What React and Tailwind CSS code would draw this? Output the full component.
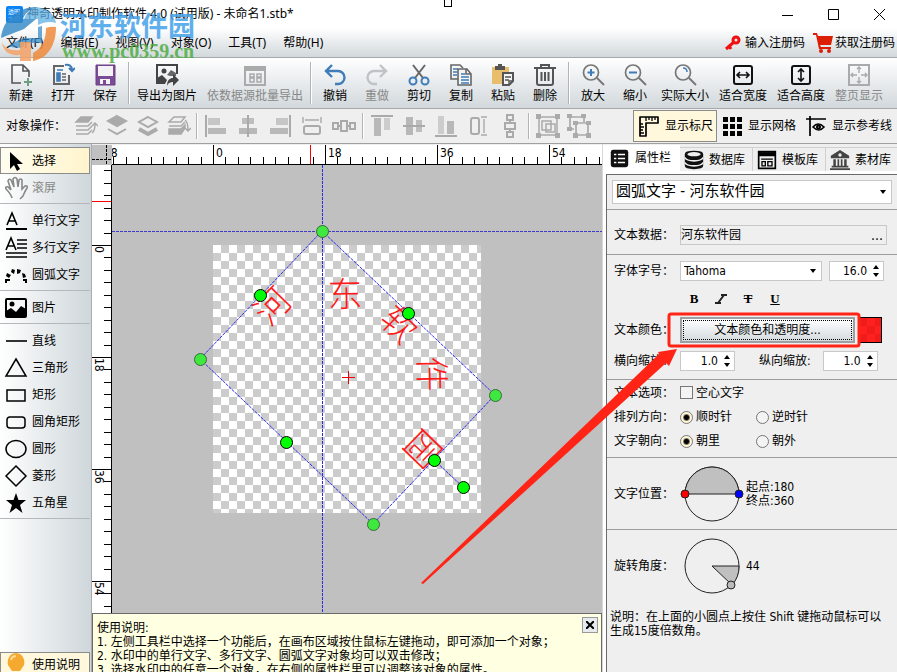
import React from 'react'

const UI = "font-['Noto_Sans','Noto_Sans_CJK_SC',sans-serif]"
const TAHOMA = "font-['DejaVu_Sans_Condensed','Noto_Sans_CJK_SC',sans-serif]"

function Svg({ size = 24, className = '', children }) {
  return (
    <svg width={size} height={size} viewBox="0 0 24 24" fill="none" stroke="currentColor" strokeWidth="2" className={`shrink-0 ${className}`} aria-hidden="true">
      {children}
    </svg>
  )
}

/* ---------- main toolbar icons ---------- */

const NewIcon = () => (
  <Svg className="text-[#555]">
    <path d="M12 20H3V2h11l6 6v6M14 2v6h6" strokeWidth="1.6" />
    <path d="M19 15v8M15 19h8" stroke="#6f9e80" />
  </Svg>
)
const OpenIcon = () => (
  <Svg className="text-[#666]">
    <path d="M13 3H3v18h15v-9" />
    <path d="M6 7h6M6 10h3v8H6z" fill="#3f7cb8" stroke="#3f7cb8" strokeWidth="1.6" />
    <path d="M11 11h4M11 14h4M11 17h4" strokeWidth="1.6" />
    <path d="M14 2c4-1 7 1 7 5M18 5l3 3 3-3" stroke="#3f7cb8" />
  </Svg>
)
const SaveIcon = () => (
  <Svg>
    <path d="M3 2h19v20H3z" fill="#7b4b96" stroke="#6a4085" strokeWidth="1" />
    <path d="M5 3h15v10H5z" fill="#f3f3f6" stroke="none" />
    <path d="M7 16h10v5H7z" fill="#f3f3f6" stroke="none" />
    <path d="M10 17h3v4h-3z" fill="#7b4b96" stroke="none" />
  </Svg>
)
const ExportIcon = () => (
  <Svg className="text-[#444]">
    <path d="M10 20H2V2h20v9" />
    <circle cx="9" cy="8" r="2.5" fill="currentColor" stroke="none" />
    <path d="M2 20v-5l5-3 5 5-2 4z" fill="currentColor" stroke="none" />
    <path d="M12 12l4-5 5 3v3h-6z" fill="currentColor" stroke="none" opacity=".8" />
    <path d="M12 23c0-6 3-8 6-8v-4l6 6-6 6v-4c-3 0-5 1-6 4z" fill="currentColor" stroke="none" />
  </Svg>
)
const BatchIcon = () => (
  <Svg className="text-[#aaa]">
    <path d="M2 4h20v18H2z" />
    <path d="M2 6h20" strokeWidth="4" />
    <path d="M7 11h4v3H7zM7 15h4v4H7zM14 11h4v3h-4zM14 15h4v4h-4z" strokeWidth="1.5" />
  </Svg>
)
const UndoIcon = () => (
  <Svg className="text-[#3f7cb8]">
    <path d="M9 2L3 8l6 6M3 8h12a6 6 0 0 1 0 13h-3" strokeWidth="2.4" />
  </Svg>
)
const RedoIcon = () => (
  <Svg className="text-[#bfc3c6]">
    <path d="M15 2l6 6-6 6M21 8H9a6 6 0 0 0 0 13h3" strokeWidth="2.4" />
  </Svg>
)
const CutIcon = () => (
  <Svg className="text-[#666]">
    <path d="M6 2l10 13M18 2L8 15" />
    <circle cx="6" cy="18" r="3.5" stroke="#3f7cb8" />
    <circle cx="18" cy="18" r="3.5" stroke="#3f7cb8" />
  </Svg>
)
const CopyIcon = () => (
  <Svg className="text-[#666]">
    <path d="M9 16H2V2h9l3 3" strokeWidth="1.6" />
    <path d="M4 6h5M4 9h4M4 12h4" stroke="#3f7cb8" strokeWidth="1.5" />
    <path d="M9 6h9l4 5v11H9z" fill="#f1f3f5" strokeWidth="1.6" />
    <path d="M17 6v5h5" strokeWidth="1.6" />
    <path d="M12 11h4M12 14h8M12 17h8M12 20h8" stroke="#3f7cb8" strokeWidth="1.5" />
  </Svg>
)
const PasteIcon = () => (
  <Svg className="text-[#555]">
    <path d="M1 4h17v17H1z" fill="#e8bd6c" stroke="none" />
    <path d="M4 3h3V1h4v2h3v4H4z" fill="currentColor" stroke="none" />
    <path d="M12 10h10v8l-4 4h-6z" fill="#f4f4f4" />
    <path d="M14 14h6M14 17h4M18 22v-4h4" strokeWidth="1.4" />
  </Svg>
)
const TrashIcon = () => (
  <Svg className="text-[#555]">
    <path d="M1 5h22M8 5V2h8v3" />
    <path d="M4 5v15q0 2 2 2h12q2 0 2-2V5" />
    <path d="M8.5 9v9M12 9v9M15.5 9v9" />
  </Svg>
)
const Magnifier = ({ children }) => (
  <Svg className="text-[#777]">
    <circle cx="10" cy="9.5" r="7.5" strokeWidth="1.7" />
    <path d="M16 15l7 7" strokeWidth="2" />
    {children}
  </Svg>
)
const ZoomInIcon = () => <Magnifier><path d="M10 6v7M6.5 9.5h7" stroke="#3f7cb8" /></Magnifier>
const ZoomOutIcon = () => <Magnifier><path d="M6 9.5h8" stroke="#3f7cb8" /></Magnifier>
const ActualIcon = () => <Magnifier><path d="M10 5q4 0 4 4" stroke="#3f7cb8" strokeWidth="1.5" /></Magnifier>
const FitWidthIcon = () => (
  <Svg className="text-[#111]">
    <rect x="3" y="3" width="18" height="18" rx="2" />
    <path d="M6 12h12M9 9l-3 3 3 3M15 9l3 3-3 3" strokeWidth="1.6" />
  </Svg>
)
const FitHeightIcon = () => (
  <Svg className="text-[#111]">
    <rect x="3" y="3" width="18" height="18" rx="2" />
    <path d="M12 6v12M9 9l3-3 3 3M9 15l3 3 3-3" strokeWidth="1.6" />
  </Svg>
)
const FitPageIcon = () => (
  <Svg className="text-[#aaa]">
    <path d="M2 2h20v20H2z" />
    <path d="M12 4v6M12 14v6M4 12h6M14 12h6M10 6l2-2 2 2M10 18l2 2 2-2M6 10l-2 2 2 2M18 10l2 2-2 2" strokeWidth="1.4" />
  </Svg>
)

const TOOLBAR = [
  [
    { label: '新建', icon: NewIcon, w: 'w-[42px]' },
    { label: '打开', icon: OpenIcon, w: 'w-[42px]' },
    { label: '保存', icon: SaveIcon, w: 'w-[42px]' },
  ],
  [
    { label: '导出为图片', icon: ExportIcon, w: 'w-[70px]' },
    { label: '依数据源批量导出', icon: BatchIcon, w: 'w-[106px]', disabled: true },
  ],
  [
    { label: '撤销', icon: UndoIcon, w: 'w-[42px]' },
    { label: '重做', icon: RedoIcon, w: 'w-[42px]', disabled: true },
    { label: '剪切', icon: CutIcon, w: 'w-[42px]' },
    { label: '复制', icon: CopyIcon, w: 'w-[42px]' },
    { label: '粘贴', icon: PasteIcon, w: 'w-[42px]' },
    { label: '删除', icon: TrashIcon, w: 'w-[42px]' },
  ],
  [
    { label: '放大', icon: ZoomInIcon, w: 'w-[42px]' },
    { label: '缩小', icon: ZoomOutIcon, w: 'w-[42px]' },
    { label: '实际大小', icon: ActualIcon, w: 'w-[58px]' },
    { label: '适合宽度', icon: FitWidthIcon, w: 'w-[58px]' },
    { label: '适合高度', icon: FitHeightIcon, w: 'w-[58px]' },
    { label: '整页显示', icon: FitPageIcon, w: 'w-[58px]', disabled: true },
  ],
]

/* ---------- object bar icons ---------- */

const OBJECT_TOOLS = [
  [
    ['上移一层', <g strokeWidth="1.5"><path d="M7 3h11l-4 5H2z" fill="currentColor" /><path d="M2 12h12l4-4M2 16h12l4-4M2 20h12l4-4" /><path d="M18 19q3-2 3-9M18 12l3-3 3 3" /></g>],
    ['置于顶层', <g><path d="M12 2l9 5-9 5-9-5z" fill="currentColor" /><path d="M3 15l9 5 9-5" /></g>],
    ['置于底层', <g><path d="M12 3l9 5-9 5-9-5z" /><path d="M3 15l9 5 9-5" strokeWidth="4" /></g>],
    ['下移一层', <g strokeWidth="1.5"><path d="M7 3h11l-4 5H2zM2 12h12l4-4" /><path d="M2 15h12l4-4v3l-4 6H2z" fill="currentColor" /><path d="M18 6q3 2 3 10M18 14l3 3 3-3" /></g>],
  ],
  [
    ['左对齐', <g fill="currentColor" stroke="none"><path d="M1 1h2v22H1z" /><path d="M4 4h12v7H4z" opacity=".6" /><path d="M4 14h18v6H4z" opacity=".8" /></g>],
    ['水平居中', <g fill="currentColor" stroke="none"><path d="M11 1h2v22h-2z" /><path d="M6 4h12v6H6z" opacity=".7" /><path d="M3 14h18v6H3z" opacity=".8" /></g>],
    ['右对齐', <g fill="currentColor" stroke="none"><path d="M21 1h2v22h-2z" /><path d="M8 4h12v7H8z" opacity=".6" /><path d="M2 14h18v6H2z" opacity=".8" /></g>],
    ['等宽', <g><rect x="4" y="12" width="16" height="8" rx="2" /><path d="M3 3v6M21 3v6M5 6h14" strokeWidth="1.4" /></g>],
    ['水平等距', <g><path d="M1 9h5v6H1zM9 7h6v10H9zM18 9h5v6h-5zM6 12h3M15 12h3" /></g>],
  ],
  [
    ['顶端对齐', <g fill="currentColor" stroke="none"><path d="M1 1h22v2H1z" /><path d="M4 4h7v18H4z" opacity=".8" /><path d="M14 4h6v12h-6z" opacity=".5" /></g>],
    ['垂直居中', <g fill="currentColor" stroke="none"><path d="M1 11h22v2H1z" /><path d="M4 3h7v18H4z" opacity=".8" /><path d="M14 6h6v12h-6z" opacity=".7" /></g>],
    ['底端对齐', <g fill="currentColor" stroke="none"><path d="M1 21h22v2H1z" /><path d="M4 2h6v18H4z" opacity=".5" /><path d="M13 7h7v13h-7z" opacity=".8" /></g>],
    ['等高', <g><rect x="5" y="4" width="8" height="16" rx="2" /><path d="M15 3h6M15 21h6M18 5v14" strokeWidth="1.4" /></g>],
    ['垂直等距', <g><path d="M9 1h6v5H9zM7 9h10v6H7zM9 18h6v5H9zM12 6v3M12 15v3" /></g>],
  ],
  [
    ['组合', <g><path d="M3 3h18v18H3zM6 7h9v9H6zM10 10h9v8h-9z" strokeWidth="1.5" /><path d="M0 0h5v5H0zM19 0h5v5h-5zM0 19h5v5H0zM19 19h5v5h-5z" fill="currentColor" stroke="none" /></g>],
    ['取消组合', <g><path d="M2 3h15v5M3 3v12h4M9 9h12v12H9z" strokeWidth="1.7" /><path d="M0 0h5v4H0zM14 0h5v4h-5zM0 13h5v4H0zM6 7h5v4H6zM19 7h5v4h-5zM6 19h5v5H6zM19 19h5v5h-5z" fill="currentColor" stroke="none" /></g>],
  ],
]

function RulerIcon() {
  return (
    <Svg className="text-black">
      <path d="M3 3h18v6H9v13H3z" strokeWidth="1.7" strokeLinejoin="round" />
      <path d="M9 3v4M12 3v3M15 3v4M18 3v3M3 10h3M3 13h4M3 16h3M3 19h4" strokeWidth="1.3" />
    </Svg>
  )
}
function GridIcon() {
  return (
    <Svg className="text-black">
      <path d="M2 3h5v5H2zM9 3h5v5H9zM16 3h5v5h-5zM2 10h5v5H2zM9 10h5v5H9zM16 10h5v5h-5zM2 17h5v5H2zM9 17h5v5H9zM16 17h5v5h-5z" fill="currentColor" stroke="none" />
    </Svg>
  )
}
function GuideIcon() {
  return (
    <Svg className="text-black">
      <path d="M2 5h20M6 2v20" strokeWidth="1.7" />
      <path d="M9 13q5-6 11 0-5 6-11 0z" strokeWidth="1.6" />
      <circle cx="14.5" cy="13" r="1.5" />
    </Svg>
  )
}

/* ---------- left tool palette ---------- */

const TOOLS = [
  [
    ['选择', <path d="M6 3v17l4-4 3 6 3-2-3-5h6z" fill="currentColor" stroke="none" />, 'active'],
    ['滚屏', <path d="M8 22q-1-4-6-9-1-3 2-2l3 3L4 5q1-3 3-1l3 7-1-8q2-3 4 0l1 8 1-7q2-2 3 0v9l3-3q3-1 2 2-2 3-4 8l-3 3" strokeWidth="1.6" />, 'disabled'],
  ],
  [
    ['单行文字', <g><path d="M3 16L8 4l5 12M5 12h6" strokeWidth="1.6" /><path d="M2 20h21" /></g>],
    ['多行文字', <g strokeWidth="1.6"><path d="M2 14L7 2l5 12M4 10h6" /><path d="M13 4h10M13 8h10M13 12h10M2 17h21M2 21h21" /></g>],
    ['圆弧文字', <g fill="currentColor" stroke="none"><path d="M1 16h5v2H3v2H1zM3 10l4 2-2 3-3-2zM8 6l3 1-1 4-3-2zM13 6l4 1-1 3-3 1zM18 10l3 1 1 3-3 1zM19 16h4v4h-2v-2h-2z" /></g>],
  ],
  [
    ['图片', <g><rect x="2" y="3" width="20" height="18" rx="1" /><circle cx="8" cy="8" r="2.5" fill="currentColor" stroke="none" /><path d="M2 21v-6l5-3 5 4 5-6 5 3v8z" fill="currentColor" stroke="none" /></g>],
  ],
  [
    ['直线', <path d="M2 12h21" strokeWidth="1.6" />],
    ['三角形', <path d="M12 3l10 17H2z" strokeWidth="1.5" />],
    ['矩形', <path d="M3 7h18v11H3z" strokeWidth="1.5" />],
    ['圆角矩形', <rect x="3" y="7" width="18" height="11" rx="3" strokeWidth="1.5" />],
    ['圆形', <ellipse cx="12" cy="12" rx="10" ry="8.5" strokeWidth="1.5" />],
    ['菱形', <path d="M12 2l10 10-10 10L2 12z" strokeWidth="1.5" />],
    ['五角星', <path d="M12 2l2.5 7H22l-6 5 2.5 8-6.5-5-6.5 5 2.5-8L2 9h7.5z" fill="currentColor" stroke="none" />],
  ],
]

function Divider() {
  return <div className="mx-[2px] my-1 w-px self-stretch border-r border-white bg-[#b0b4b7] box-content" />
}

function TitleBar() {
  return (
    <header className="flex h-7 items-center bg-white pl-[6px] text-xs">
      <svg width="17" height="17" viewBox="0 0 17 17" className="mr-1 shrink-0" aria-hidden="true">
        <rect width="17" height="17" rx="2" fill="#0a84f5" />
        <text x="8" y="8" fontSize="6" fill="#fff" textAnchor="middle">透明</text>
        <text x="8" y="15" fontSize="6" fill="#9fd0ff" textAnchor="middle">水印</text>
      </svg>
      <h1 className="whitespace-nowrap">神奇透明水印制作软件 4.0 (试用版) - 未命名1.stb*</h1>
      <div className="ml-auto flex gap-[35px] pr-3">
        <button aria-label="最小化">
          <svg width="11" height="11" stroke="#000"><path d="M0 6.5h11" /></svg>
        </button>
        <button aria-label="最大化">
          <svg width="11" height="11" stroke="#000" fill="none"><path d="M.5.5h10v10H.5z" /></svg>
        </button>
        <button aria-label="关闭">
          <svg width="11" height="11" stroke="#000"><path d="M0 0l11 11M11 0L0 11" /></svg>
        </button>
      </div>
    </header>
  )
}

function MenuBar() {
  const menus = ['文件(F)', '编辑(E)', '视图(V)', '对象(O)', '工具(T)', '帮助(H)']
  return (
    <nav className="flex h-[30px] items-center border-b border-[#a5a9ab] bg-linear-to-b from-white to-[#d2d8dc] pl-[6px] text-xs">
      <div className="flex gap-[17px]">
        {menus.map((m) => (
          <button key={m} className="whitespace-nowrap">{m}</button>
        ))}
      </div>
      <div className="ml-auto flex items-center pr-[2px]">
        <a href="#register" className="mr-2 flex items-center gap-1 whitespace-nowrap">
          <svg width="16" height="16" viewBox="0 0 16 16" fill="none" stroke="#f01010" strokeWidth="3" aria-hidden="true">
            <circle cx="11" cy="5" r="3" />
            <path d="M9 7l-8 7M4 11l2 3" />
          </svg>
          输入注册码
        </a>
        <a href="#buy" className="flex items-center gap-[2px] whitespace-nowrap">
          <svg width="20" height="20" viewBox="0 0 20 20" fill="#dc1e05" aria-hidden="true">
            <path d="M0 0h4l1 3h15l-2 9H7l1 2h10v2H6L3 2H0z" />
            <circle cx="8" cy="18" r="2" />
            <circle cx="16" cy="18" r="2" />
          </svg>
          获取注册码
        </a>
      </div>
    </nav>
  )
}

function Toolbar() {
  return (
    <div className="flex h-[51px] border-b border-[#a5a9ab] bg-linear-to-b from-white to-[#d2d8dc] text-xs">
      {TOOLBAR.map((group, i) => (
        <React.Fragment key={i}>
          {i > 0 && <Divider />}
          {group.map(({ label, icon: Icon, w, disabled }) => (
            <button key={label} disabled={disabled} className={`flex shrink-0 flex-col items-center pt-[5px] whitespace-nowrap disabled:text-[#888] ${w}`}>
              <Icon />
              <span className="leading-[18px]">{label}</span>
            </button>
          ))}
        </React.Fragment>
      ))}
    </div>
  )
}

function ObjectBar() {
  return (
    <div className="flex h-[35px] items-center border-b border-[#a0a0a0] bg-[#efefef] pl-[6px] text-xs">
      <span className="mr-1 whitespace-nowrap">对象操作：</span>
      {OBJECT_TOOLS.map((group, i) => (
        <React.Fragment key={i}>
          {i > 0 && <Divider />}
          {group.map(([name, art]) => (
            <button key={name} aria-label={name} disabled className={`flex shrink-0 justify-center text-[#aaa] ${i % 3 ? 'w-8' : 'w-[31px]'}`}>
              <Svg size={24}>{art}</Svg>
            </button>
          ))}
        </React.Fragment>
      ))}
      <div className="ml-auto flex h-full items-center pr-[5px] whitespace-nowrap">
        <button className="mr-1 flex h-8 items-center gap-1 border border-[#8c8c8c] bg-[#fff8dc] pr-[3px] pl-[3px]">
          <RulerIcon />显示标尺
        </button>
        <button className="mr-2 flex items-center gap-[3px]"><GridIcon />显示网格</button>
        <button className="flex items-center gap-1"><GuideIcon />显示参考线</button>
      </div>
    </div>
  )
}

function Palette() {
  return (
    <aside className="flex w-[92px] shrink-0 flex-col border-r border-[#a8acae] bg-linear-to-r from-white to-[#cfd7db] pt-[3px] text-xs">
      {TOOLS.map((group, i) => (
        <div key={i} className="mb-[3px] mr-[1px] border-b border-[#b4b8ba] pb-[2px]">
          {group.map(([name, art, state]) => (
            <button
              key={name}
              disabled={state === 'disabled'}
              className={`flex h-[27px] w-full items-center gap-1 pl-[3px] whitespace-nowrap disabled:text-[#888] ${state === 'active' ? 'border border-[#8c8c8c] bg-linear-to-r from-[#fffdf0] to-[#fff4cc]' : 'border border-transparent'}`}
            >
              <Svg>{art}</Svg>
              {name}
            </button>
          ))}
        </div>
      ))}
      <button className="mt-auto mr-[1px] flex h-[20px] shrink-0 items-start gap-1 overflow-hidden border border-b-0 border-[#8c8c8c] bg-[#fff8dc] pl-[3px] whitespace-nowrap">
        <Svg>
          <path d="M12 0a9 9 0 0 1 6 15l-2 3H8l-2-3a9 9 0 0 1 6-15z" fill="#f5a92f" stroke="none" />
          <path d="M7 7q1-4 5-4" stroke="#ffdc9a" />
        </Svg>
        <span className="leading-6">使用说明</span>
      </button>
    </aside>
  )
}

/* ---------- canvas ---------- */

// eighteen units are 112px on screen, split in nine ticks
const ticks = (zero, from, to) => {
  const out = []
  for (let n = Math.ceil(((from - zero) * 9) / 112); zero + (n * 112) / 9 < to; n++) {
    out.push({ n, at: Math.round(zero + (n * 112) / 9) })
  }
  return out
}

function TopRuler() {
  return (
    <svg className="h-[20px] min-w-0 flex-1 bg-white" shapeRendering="crispEdges">
      {ticks(101, 0, 2000).map(({ n, at }) => (
        <rect key={n} x={at} y={n % 9 ? 12 : 0} width="1" height={n % 9 ? 8 : 20} />
      ))}
      {ticks(101, -20, 2000).filter(({ n }) => n % 9 === 0).map(({ n, at }) => (
        <text key={n} x={at + 3} y="12" fontSize="12">{Math.abs(n * 2)}</text>
      ))}
      <rect x="198" width="1" height="20" fill="#f00" />
      <rect y="19" width="100%" height="1" />
    </svg>
  )
}

function SideRuler() {
  return (
    <svg className="h-full w-[20px] shrink-0 bg-white" shapeRendering="crispEdges">
      {ticks(80, 0, 1500).map(({ n, at }) => (
        <g key={n}>
          <rect x={n % 9 ? 12 : 0} y={at} width={n % 9 ? 8 : 20} height="1" />
          {n % 9 === 0 && <text transform={`translate(3 ${at + 1}) rotate(90)`} fontSize="12">{n * 2}</text>}
        </g>
      ))}
      <rect y="36" width="20" height="1" fill="#f00" />
      <rect x="19" width="1" height="100%" />
    </svg>
  )
}

const GLYPHS = [
  ['河', 160, 141, -46],
  ['东', 233, 129, -1],
  ['软', 287, 159, 44],
  ['件', 320, 209, 89],
  ['园', 311, 284, 134],
]
const CORNERS = [[210, 66], [383, 230], [88, 194], [261, 359]]
const HANDLES = [[148, 130], [296, 148], [174, 277], [322, 295], [351, 322]]

function Canvas() {
  return (
    <svg className="h-full min-w-0 flex-1 bg-[#c0c0c0]">
      <defs>
        <pattern id="checker" x="101" y="80" width="16" height="16" patternUnits="userSpaceOnUse">
          <rect width="16" height="16" fill="#fff" />
          <path d="M8 0h8v8H8zM0 8h8v8H0z" fill="#ccc" />
        </pattern>
      </defs>
      <rect x="101" y="80" width="268" height="268" fill="url(#checker)" />
      <g fill="#ff1a1a" fontSize="35" fontWeight="300" textAnchor="middle" className="font-['Noto_Sans_CJK_SC',sans-serif]">
        {GLYPHS.map(([ch, x, y, a]) => (
          <text key={ch} transform={`translate(${x} ${y}) rotate(${a})`} y="13">{ch}</text>
        ))}
      </g>
      <path d="M230 212.5h13M236.5 206v13" stroke="#e00" />
      <g fill="none" stroke="#2a2aee" strokeDasharray="3 1">
        <path d="M210.5 0v2000" />
        <path d="M0 66.5h2000" stroke="#3c3cc8" />
        <path d="M210 66l173 164-122 129L88 194zM322 295l29 27" />
      </g>
      {CORNERS.map(([x, y]) => <circle key={x} cx={x + 0.5} cy={y + 0.5} r="6" fill="#3fe83f" stroke="#3a6a3a" />)}
      {HANDLES.map(([x, y]) => <circle key={x} cx={x + 0.5} cy={y + 0.5} r="6" fill="#0f0" stroke="#000" />)}
    </svg>
  )
}

function HelpPane() {
  return (
    <section className={`flex h-[59px] shrink-0 items-start overflow-hidden border border-b-0 border-[#6a6a6a] bg-[#ffffe1] pt-[7px] pr-[3px] pl-1 text-xs ${TAHOMA}`}>
      <div className="min-w-0 flex-1 leading-[14px] whitespace-nowrap">
        <p>使用说明:</p>
        <ol>
          <li>1. 左侧工具栏中选择一个功能后，在画布区域按住鼠标左键拖动，即可添加一个对象；</li>
          <li>2. 水印中的单行文字、多行文字、圆弧文字对象均可以双击修改；</li>
          <li>3. 选择水印中的任意一个对象，在右侧的属性栏里可以调整该对象的属性。</li>
        </ol>
      </div>
      <button aria-label="关闭" className="-mt-1 flex size-4 shrink-0 items-center justify-center border border-[#999] bg-[#e8ebed]">
        <svg width="8" height="8" stroke="#000" strokeWidth="2"><path d="M0 0l8 8M8 0L0 8" /></svg>
      </button>
    </section>
  )
}

function Workspace() {
  return (
    <main className="flex min-w-0 flex-1 flex-col pt-[1px]">
      <div className={`flex ${TAHOMA}`}>
        <svg width="20" height="20" className="shrink-0 bg-[#c0c0c0]" stroke="#000" strokeDasharray="3 1">
          <path d="M14.5 0v20M0 14.5h20" />
        </svg>
        <TopRuler />
      </div>
      <div className={`flex min-h-0 flex-1 ${TAHOMA}`}>
        <SideRuler />
        <Canvas />
      </div>
      <HelpPane />
    </main>
  )
}

/* ---------- property panel ---------- */

const TABS = [
  ['属性栏', <g><rect x="1" y="1" width="22" height="22" rx="3" fill="#111" stroke="none" /><path d="M5 7h3M10 7h9M5 12h3M10 12h9M5 17h3M10 17h9" stroke="#fff" /></g>],
  ['数据库', <g><path d="M1 5q0-4 11-4t11 4v14q0 4-11 4T1 19z" fill="#111" stroke="none" /><ellipse cx="12" cy="5" rx="8" ry="2.5" fill="#efefef" stroke="none" /><path d="M1 9q2 4 11 4t11-4M1 15q2 4 11 4t11-4" stroke="#efefef" /></g>],
  ['模板库', <g><path d="M2 2h20v20H2z" /><path d="M2 5h20" strokeWidth="5" /><path d="M5 11h14M6 14h4v5H6zM13 14h5v5h-5z" strokeWidth="1.6" /></g>],
  ['素材库', <g fill="#444" stroke="none"><path d="M12 0l11 7v3H1V7zM2 19h20v2H2zM0 22h24v2H0zM4 11h3v8H4zM9 11h2v8H9zM13 11h2v8h-2zM17 11h3v8h-3z" /><circle cx="12" cy="6" r="2" fill="#efefef" /></g>],
]

function Row({ label, htmlFor, className = '', children }) {
  return (
    <div className={`flex items-center ${className}`}>
      <label htmlFor={htmlFor} className="w-[66px] shrink-0 whitespace-nowrap">{label}</label>
      {children}
    </div>
  )
}

function Select({ id, label, value, className }) {
  return (
    <div className={`relative ${className}`}>
      <select id={id} aria-label={label} defaultValue={value} className="size-full appearance-none border border-[#c8c8c8] bg-white pl-[3px] outline-none">
        <option>{value}</option>
      </select>
      <svg width="6" height="4" className="pointer-events-none absolute top-1/2 right-[6px] -mt-[2px]"><path d="M0 0h6L3 4z" /></svg>
    </div>
  )
}

function Spin({ id, label, value, className }) {
  return (
    <div className={`flex h-5 items-center border border-[#c8c8c8] bg-white pr-1 ${className}`}>
      <input id={id} aria-label={label} defaultValue={value} className="min-w-0 flex-1 bg-transparent pr-[6px] text-right outline-none" />
      <svg width="6" height="12" aria-hidden="true"><path d="M3 0l3 4H0zM3 12l3-4H0z" /></svg>
    </div>
  )
}

function Radio({ name, label, checked }) {
  return (
    <label className="flex w-[76px] items-center gap-[3px] whitespace-nowrap">
      <input
        type="radio"
        name={name}
        defaultChecked={checked}
        className="size-[13px] shrink-0 appearance-none rounded-full border border-[#777] bg-[#f4f4f4] checked:bg-[radial-gradient(circle,#000_2px,#fff6d8_4px)]"
      />
      {label}
    </label>
  )
}

function PropertyPanel() {
  return (
    <aside className={`flex w-[295px] shrink-0 flex-col border-l border-[#d8d8d8] bg-[#efefef] text-xs ${TAHOMA}`}>
      <div role="tablist" className="flex h-[27px] shrink-0 items-end overflow-hidden">
        {TABS.map(([name, art], i) => (
          <button
            key={name}
            role="tab"
            aria-selected={i === 0}
            className={`flex shrink-0 items-center whitespace-nowrap ${i === 0 ? 'h-[26px] w-[77px] gap-[6px] bg-white pl-[7px]' : 'h-6 w-[73px] gap-[5px] border-t border-r border-[#d0d0d0] pl-1'}`}
          >
            <Svg size={i === 0 ? 19 : 20}>{art}</Svg>
            {name}
          </button>
        ))}
      </div>
      <div className="flex-1 bg-white pt-[3px] pl-[3px]">
        <div className="h-full border-t border-l border-[#6a6a6a] bg-[#efefef]">
          <div className="h-[35px] border-b border-[#9c9c9c] px-[5px] pt-[5px]">
            <Select label="当前对象" value="圆弧文字 - 河东软件园" className="h-6 text-[15px]" />
          </div>
          <div className="flex h-[45px] items-center border-b border-[#9c9c9c] pt-[6px] pl-[7px]">
            <Row label="文本数据：" htmlFor="content" className="w-full pr-[10px]">
              <div className="flex h-5 flex-1 items-center border border-[#c8c8c8]">
                <input id="content" defaultValue="河东软件园" className="min-w-0 flex-1 bg-transparent outline-none" />
                <button aria-label="编辑文本" className="px-[3px] text-sm leading-4">...</button>
              </div>
            </Row>
          </div>
          <div className="h-[125px] border-b border-[#9c9c9c] pt-[6px] pl-[7px]">
            <Row label="字体字号：" htmlFor="family" className="h-5">
              <Select id="family" value="Tahoma" className="mr-[7px] h-5 w-[142px]" />
              <Spin label="字号" value="16.0" className="w-[55px]" />
            </Row>
            <div className="flex h-9 items-center pl-[66px] font-['Liberation_Serif',serif] text-[13px] font-bold">
              <button className="w-7">B</button>
              <button className="w-[26px]" aria-label="斜体">
                <svg width="12" height="10" className="mx-auto" stroke="#222" strokeWidth="2"><path d="M6 1h6M0 9h6M9 1L3 9" /></svg>
              </button>
              <button className="w-7 line-through">T</button>
              <button className="w-[26px] underline">U</button>
            </div>
            <Row label="文本颜色：" className="h-[26px]">
              <button className="h-[26px] w-[175px] border-2 border-[#9aa0a4] bg-linear-to-b from-white to-[#d4dade] p-px">
                <span className="flex size-full items-center justify-center border border-dotted border-black">文本颜色和透明度...</span>
              </button>
              <button aria-label="文本颜色" className="ml-[3px] h-[26px] w-[24px] border border-black bg-[repeating-conic-gradient(#ff2020_0_25%,#f01c1c_0_50%)] bg-size-[16px_16px]" />
            </Row>
            <Row label="横向缩放：" htmlFor="sx" className="h-[35px]">
              <Spin id="sx" value="1.0" className="w-[55px]" />
              <label htmlFor="sy" className="mr-3 ml-6 whitespace-nowrap">纵向缩放:</label>
              <Spin id="sy" value="1.0" className="w-[55px]" />
            </Row>
          </div>
          <div className="h-[78px] border-b border-[#9c9c9c] pl-[7px]">
            <Row label="文本选项：" className="h-[25px]">
              <label className="flex items-center gap-[3px]">
                <input type="checkbox" className="size-[13px] appearance-none border border-[#777] bg-[#f4f4f4]" />
                空心文字
              </label>
            </Row>
            <Row label="排列方向：" className="h-6">
              <Radio name="direction" label="顺时针" checked />
              <Radio name="direction" label="逆时针" />
            </Row>
            <Row label="文字朝向：" className="h-6">
              <Radio name="facing" label="朝里" checked />
              <Radio name="facing" label="朝外" />
            </Row>
          </div>
          <div className="h-[72px] border-b border-[#9c9c9c] pl-[7px]">
            <Row label="文字位置：" className="h-full">
              <svg width="64" height="58" className="mr-[2px] shrink-0" stroke="#222">
                <circle cx="32" cy="29" r="27" fill="none" />
                <path d="M5 29a27 27 0 0 1 54 0z" fill="#c0c0c0" />
                <circle cx="5" cy="29" r="4" fill="#f00" />
                <circle cx="59" cy="29" r="4" fill="#00f" />
              </svg>
              <p className="leading-[14px]">起点:180<br />终点:360</p>
            </Row>
          </div>
          <div className="h-[72px] pl-[7px]">
            <Row label="旋转角度：" className="h-full">
              <svg width="64" height="58" className="mr-[2px] shrink-0" stroke="#222">
                <circle cx="32" cy="29" r="27" fill="none" />
                <path d="M32 29h27a27 27 0 0 1-7 19z" fill="#c0c0c0" />
                <circle cx="51" cy="48" r="4" fill="#bbb" />
              </svg>
              44
            </Row>
          </div>
          <p className="pt-2 pr-2 pl-[3px] leading-[14px]">说明：在上面的小圆点上按住 Shift 键拖动鼠标可以生成15度倍数角。</p>
        </div>
      </div>
    </aside>
  )
}

/* ---------- things lying over the window ---------- */

function SiteMark() {
  return (
    <svg width="200" height="66" className="pointer-events-none absolute top-0 left-0" aria-hidden="true">
      <path d="M1 38C3 18 20 6 38 7c-9 3-13 6-15 12h13l-12 10C14 33 6 36 1 38z" fill="#2f86c4" opacity=".8" />
      <path d="M36 7c12 1 19 8 20 16-6-2-12-1-18 2V19H24q3-9 12-12z" fill="#5fb0e4" opacity=".75" />
      <path d="M8 46c4-3 9-5 16-8h14V27l4-1v17H24v4c-6 1-11 1-16-1z" fill="#2f86c4" opacity=".7" />
      <path d="M56 27c0 20-10 32-23 34v-8c9-5 13-13 13-25q5-2 10-1z" fill="#f08a3c" opacity=".85" />
      <path d="M2 42c2 6 8 9 18 8v-8h11v19H20v-6C9 56 3 51 2 42z" fill="#f5a266" opacity=".85" />
      <text x="60" y="36" fontSize="27" fontWeight="700" fill="#45a2ea" opacity=".85" className="font-['Noto_Sans_CJK_SC',sans-serif]">河东软件园</text>
      <text x="62" y="58" fontSize="20" fontWeight="700" fill="#4fae45" opacity=".85" className="font-['Liberation_Serif',serif]">www.pc0359.cn</text>
    </svg>
  )
}

function Callout() {
  return (
    <svg width="897" height="672" className="pointer-events-none absolute top-0 left-0" aria-hidden="true">
      <rect x="669" y="314" width="190" height="32" rx="2" fill="none" stroke="#ff2415" strokeWidth="3" />
      <path d="M421 583L659 354l-1-2 19-3-8 17-3-3L423 584z" fill="#ff2415" />
    </svg>
  )
}

export default function App() {
  return (
    <div className={`relative flex h-screen flex-col overflow-hidden bg-[#efefef] text-black ${UI}`}>
      <TitleBar />
      <MenuBar />
      <Toolbar />
      <ObjectBar />
      <div className="flex min-h-0 flex-1">
        <Palette />
        <Workspace />
        <PropertyPanel />
      </div>
      <div className="absolute top-0 left-[444px] h-[7px] w-2 border border-t-0 border-black" />
      <SiteMark />
      <Callout />
    </div>
  )
}
